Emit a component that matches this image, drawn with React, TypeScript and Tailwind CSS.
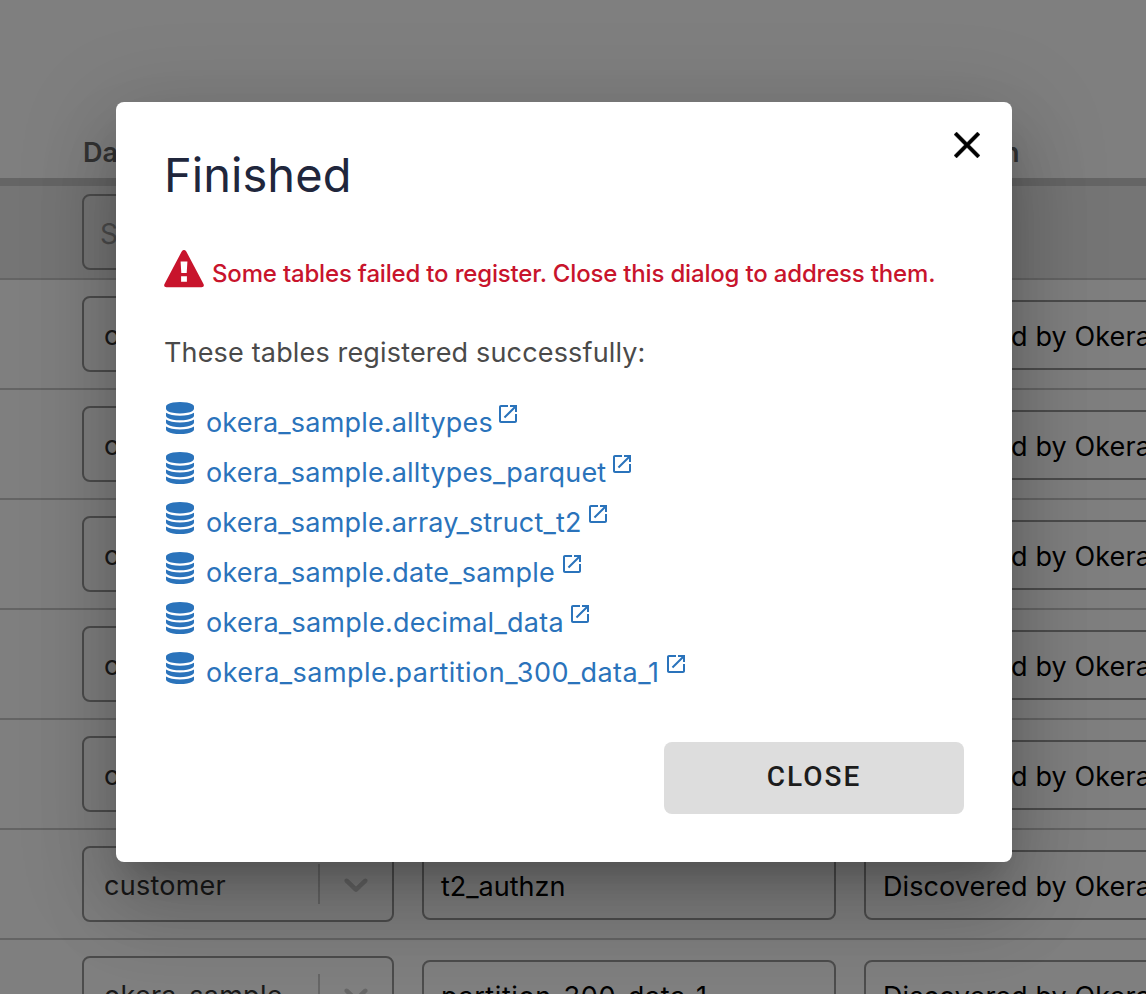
import React from "react";

type Row = { database: string; name: string; description: string; tracking: string };

const rows: Row[] = [
  { database: "okera_sample", name: "alltypes", description: "Discovered by Okera", tracking: "tracking-normal" },
  { database: "okera_sample", name: "alltypes_parquet", description: "Discovered by Okera", tracking: "tracking-normal" },
  { database: "okera_sample", name: "array_struct_t2", description: "Discovered by Okera", tracking: "tracking-normal" },
  { database: "okera_sample", name: "date_sample", description: "Discovered by Okera", tracking: "tracking-normal" },
  { database: "okera_sample", name: "decimal_data", description: "Discovered by Okera", tracking: "tracking-normal" },
  { database: "customer", name: "t2_authzn", description: "Discovered by Okera", tracking: "tracking-normal" },
  { database: "okera_sample", name: "partition_300_data_1", description: "Discovered by Okera", tracking: "tracking-[0.6px]" },
];

const registered = [
  { name: "okera_sample.alltypes", style: "w-[286px] tracking-[0.18px]" },
  { name: "okera_sample.alltypes_parquet", style: "w-[400px] tracking-[0.18px]" },
  { name: "okera_sample.array_struct_t2", style: "w-[376px] tracking-[0.18px]" },
  { name: "okera_sample.date_sample", style: "w-[350px] tracking-[0.22px]" },
  { name: "okera_sample.decimal_data", style: "w-[358px] tracking-[0.27px]" },
  { name: "okera_sample.partition_300_data_1", style: "w-[454px] tracking-[0.47px]" },
];

function DatabaseIcon() {
  return (
    <svg viewBox="0 0 1536 1792" preserveAspectRatio="none" className="mt-1 h-8 w-7 shrink-0" fill="currentColor">
      <path d="M768 768q237 0 443-43t325-127v170q0 69-103 128t-280 93.500-385 34.500-385-34.500-280-93.500-103-128v-170q119 84 325 127t443 43zM768 1536q237 0 443-43t325-127v170q0 69-103 128t-280 93.500-385 34.500-385-34.500-280-93.500-103-128v-170q119 84 325 127t443 43zM768 1152q237 0 443-43t325-127v170q0 69-103 128t-280 93.500-385 34.500-385-34.500-280-93.500-103-128v-170q119 84 325 127t443 43zM768 0q208 0 385 34.500t280 93.500 103 128v128q0 69-103 128t-280 93.500-385 34.500-385-34.500-280-93.500-103-128v-128q0-69 103-128t280-93.500 385-34.500z" />
    </svg>
  );
}

function OpenIcon() {
  return (
    <svg viewBox="3 3 18 18" className="ml-[7px] mt-[7px] size-[18px] shrink-0" fill="currentColor">
      <path d="M19 19H5V5h7V3H5c-1.110 0-2 .9-2 2v14c0 1.100.89 2 2 2h14c1.100 0 2-.9 2-2v-7h-2v7zM14 3v2h3.590l-9.830 9.830 1.410 1.410L19 6.410V10h2V3h-7z" />
    </svg>
  );
}

function WarningIcon() {
  return (
    <svg viewBox="0 0 40 38" className="h-[38px] w-10 shrink-0" fill="currentColor">
      <path fillRule="evenodd" d="M17.700 1.500Q20-1.300 22.300 1.500L39.500 34Q40.800 37.200 37.500 37.200H2.500Q-.8 37.200.5 34ZM16.600 11.600 17.300 23H22.700L23.400 11.600ZM17.100 26.300V31.700H22.900V26.300Z" />
    </svg>
  );
}

function Select({ value, muted = false }: { value: string; muted?: boolean }) {
  return (
    <div className="flex h-[76px] w-[312px] shrink-0 items-center rounded-lg border-2 border-[#999]">
      <span className={muted ? "flex-1 pl-4 pt-1 text-[28px] text-[#999]" : "flex-1 pl-5 pt-1 text-[27px] tracking-[0.25px] text-[#333]"}>
        {value}
      </span>
      <span className="h-10 w-0.5 bg-[#ccc]" />
      <svg viewBox="0 0 20 20" className="mx-4 size-10" fill="#ccc">
        <path d="M4.516 7.548c0.436-0.446 1.043-0.481 1.576 0l3.908 3.747 3.908-3.747c0.533-0.481 1.141-0.446 1.574 0 0.436 0.445 0.408 1.197 0 1.615-0.406 0.418-4.695 4.502-4.695 4.502-0.217 0.223-0.502 0.335-0.787 0.335s-0.570-0.112-0.789-0.335c0 0-4.287-4.084-4.695-4.502s-0.436-1.170 0-1.615z" />
      </svg>
    </div>
  );
}

function Field({ value, className = "" }: { value: string; className?: string }) {
  return (
    <div className={`mt-0.5 flex h-[70px] w-[414px] shrink-0 items-center whitespace-nowrap rounded-lg border-2 border-[#999] pl-[17px] pt-1 text-[27px] text-black ${className}`}>
      {value}
    </div>
  );
}

export default function App() {
  return (
    <div className="relative h-[994px] w-[1146px] overflow-hidden bg-white font-['Inter',sans-serif]">
      <div className="flex h-[186px] w-[1400px] items-end border-b-8 border-[#cbcbcb] pb-[9px] pl-[83px] text-[27px] font-semibold leading-8 text-[#666]">
        <span className="w-[340px]">Database</span>
        <span className="w-[446px]">Name</span>
        <span>Description</span>
      </div>
      <div className="flex h-[94px] w-[1400px] items-start border-b-2 border-[#c8c8c8] bg-[#eaeaea] pl-[82px] pt-2">
        <Select value="Select..." muted />
      </div>
      {rows.map((row) => (
        <div key={row.name} className="flex h-[110px] w-[1400px] items-center gap-7 border-b-2 border-[#c8c8c8] pl-[82px]">
          <Select value={row.database} />
          <Field value={row.name} className={row.tracking} />
          <Field value={row.description} className="tracking-[0.1px]" />
        </div>
      ))}

      <div className="absolute inset-0 bg-black/50 pl-[116px] pt-[102px]">
        <div
          role="dialog"
          className="relative flex h-[760px] w-[896px] flex-col rounded-lg bg-white px-12 pb-12 pt-[43px] shadow-[0_22px_30px_-14px_rgba(0,0,0,0.2),0_48px_76px_6px_rgba(0,0,0,0.14),0_18px_92px_16px_rgba(0,0,0,0.12)]"
        >
          <button aria-label="Close" className="absolute right-[32px] top-[30px] text-black">
            <svg viewBox="5 5 14 14" className="size-[26px]" fill="currentColor" stroke="currentColor" strokeWidth="0.2">
              <path d="M19 6.410L17.590 5 12 10.590 6.410 5 5 6.410 10.590 12 5 17.590 6.410 19 12 13.410 17.590 19 19 17.590 13.410 12z" />
            </svg>
          </button>

          <h2 className="h-[60px] text-[47px] leading-[60px] tracking-[0.05px] text-[#20263c]">Finished</h2>

          <div className="mt-[45px] flex h-[38px] items-start gap-2 text-[#c8142c]">
            <WarningIcon />
            <p className="whitespace-nowrap pt-2 text-[24px] font-medium leading-8 tracking-[-0.18px]">
              Some tables failed to register. Close this dialog to address them.
            </p>
          </div>

          <p className="mt-[47px] h-9 whitespace-nowrap text-[27px] leading-9 tracking-[0.16px] text-[#4a4a4a]">
            These tables registered successfully:
          </p>

          <ul className="mt-[27px] text-[#2a73bb]">
            {registered.map((table) => (
              <li key={table.name} className="flex h-[50px] items-start pl-0.5">
                <DatabaseIcon />
                <a className={`ml-3 whitespace-nowrap pt-[7px] text-[27px] leading-9 ${table.style}`}>{table.name}</a>
                <OpenIcon />
              </li>
            ))}
          </ul>

          <button className="ml-auto mt-auto h-[72px] w-[300px] rounded-lg bg-[#ddd] pb-0.5 font-['Roboto',sans-serif] text-[28px] font-medium tracking-[2px] text-[#1c1c1c]">
            CLOSE
          </button>
        </div>
      </div>
    </div>
  );
}
